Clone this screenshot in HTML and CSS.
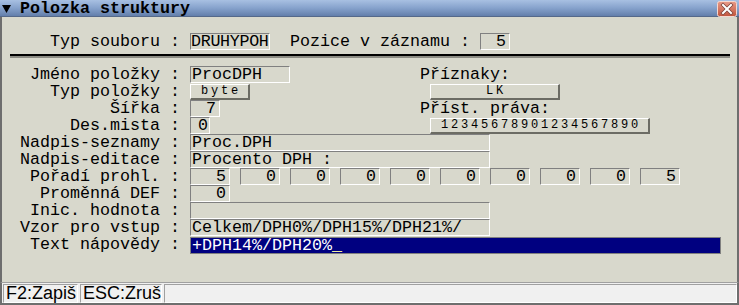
FILE: index.html
```html
<!DOCTYPE html>
<html>
<head>
<meta charset="utf-8">
<link rel="stylesheet" href="styles.css">
</head>
<body>
<div class="window">
  <div class="titlebar">
    <svg class="tri" width="9" height="8" viewBox="0 0 9 8"><polygon points="0,0 9,0 4.5,8" fill="#000"/></svg>
    <span class="title">Polozka struktury</span>
    <svg class="close" width="20" height="16" viewBox="0 0 20 16">
      <defs><linearGradient id="cg" x1="0" y1="0" x2="0" y2="1"><stop offset="0" stop-color="#e89a88"/><stop offset="1" stop-color="#c0543c"/></linearGradient></defs>
      <rect x="0.5" y="0.5" width="19" height="15" rx="2" fill="url(#cg)" stroke="#f4d8d0"/>
      <path d="M6 4 L14 12 M14 4 L6 12" stroke="#7a4038" stroke-width="3.4" stroke-linecap="square"/>
      <path d="M6 4 L14 12 M14 4 L6 12" stroke="#fff" stroke-width="2" stroke-linecap="square"/>
    </svg>
  </div>
  <div class="content">
    <div class="head">
      <span class="lbl">Typ souboru :</span>
      <span class="fld w80 tight">DRUHYPOH</span>
      <span class="txt gap20">Pozice v záznamu :</span>
      <span class="fld w30 r">5</span>
    </div>
    <div class="rule"></div>
    <div class="upper">
      <div class="col-left">
        <div class="row"><span class="lbl">Jméno položky :</span><span class="fld w100">ProcDPH</span></div>
        <div class="row"><span class="lbl">Typ položky :</span><span class="btn w60">byte</span></div>
        <div class="row"><span class="lbl">Šířka :</span><span class="fld w30 r">7</span></div>
        <div class="row"><span class="lbl">Des.mista :</span><span class="fld w20 pl">0</span></div>
      </div>
      <div class="col-right">
        <div class="row"><span class="txt">Příznaky:</span></div>
        <div class="row"><span class="btn w130 ind">LK</span></div>
        <div class="row"><span class="txt">Příst. práva:</span></div>
        <div class="row"><span class="btn w220 ind">12345678901234567890</span></div>
      </div>
    </div>
    <div class="row"><span class="lbl">Nadpis-seznamy :</span><span class="fld w300">Proc.DPH</span></div>
    <div class="row"><span class="lbl">Nadpis-editace :</span><span class="fld w300">Procento DPH :</span></div>
    <div class="row"><span class="lbl">Pořadí prohl. :</span>
      <div class="multi">
        <span class="fld w40 r">5</span><span class="fld w40 r">0</span><span class="fld w40 r">0</span><span class="fld w40 r">0</span><span class="fld w40 r">0</span><span class="fld w40 r">0</span><span class="fld w40 r">0</span><span class="fld w40 r">0</span><span class="fld w40 r">0</span><span class="fld w40 r">5</span>
      </div>
    </div>
    <div class="row"><span class="lbl">Proměnná DEF :</span><span class="fld w40 r">0</span></div>
    <div class="row"><span class="lbl">Inic. hodnota :</span><span class="fld w300"></span></div>
    <div class="row"><span class="lbl">Vzor pro vstup :</span><span class="fld w300">Celkem/DPH0%/DPH15%/DPH21%/</span></div>
    <div class="row"><span class="lbl">Text nápovědy :</span><span class="fld active">+DPH14%/DPH20%<span class="cursor">_</span></span></div>
  </div>
  <div class="status">
    <span class="cell c1">F2:Zapiš</span>
    <span class="cell c2">ESC:Zruš</span>
    <span class="cell c3"></span>
  </div>
</div>
</body>
</html>
```
FILE: styles.css
```css
html, body {
  margin: 0;
  padding: 0;
  background: #d8d8cc;
}
.window {
  width: 739px;
  height: 305px;
  box-sizing: border-box;
  display: flex;
  flex-direction: column;
  background: #d8d8cc;
  font-family: "Liberation Mono", monospace;
  font-size: 16.67px;
  color: #000;
  overflow: hidden;
}
.titlebar {
  height: 17px;
  flex: none;
  display: flex;
  align-items: center;
  background: linear-gradient(#a8c0e2, #86a2cc 50%, #637fab);
  border-bottom: 1px solid #55698a;
  box-sizing: border-box;
}
.tri {
  margin-left: 2px;
  margin-top: 1px;
}
.title {
  margin-left: 9px;
  font-weight: bold;
  line-height: 15px;
  flex: 1;
}
.close {
  margin-right: 2px;
  margin-top: 1px;
}
.content {
  flex: 1;
  border-left: 2px solid #6e6e6e;
  border-right: 2px solid #6e6e6e;
  display: flex;
  flex-direction: column;
}
.head {
  display: flex;
  height: 17px;
  line-height: 17px;
  margin-top: 16px;
}
.rule {
  margin: 4px 7px 0 8px;
  height: 2px;
  background: #000;
  border-bottom: 2px solid #8c8c84;
}
.upper {
  display: flex;
  margin-top: 8px;
}
.col-left {
  width: 418px;
}
.row {
  display: flex;
  height: 17px;
  white-space: pre;
}
.lbl {
  width: 178px;
  text-align: right;
  margin-right: 10px;
  line-height: 17px;
  flex: none;
}
.txt {
  line-height: 17px;
  white-space: pre;
}
.gap20 {
  margin-left: 20px;
  margin-right: 10px;
}
.fld {
  box-sizing: border-box;
  height: 17px;
  line-height: 15px;
  border: 1px solid;
  border-color: #808080 #fff #fff #808080;
  padding: 0 0 0 1px;
  white-space: pre;
  flex: none;
}
.tight { letter-spacing: -0.3px; padding-left: 0; }
.r { text-align: right; padding: 0 3px 0 0; }
.pl { padding-left: 7px; }
.w20 { width: 20px; }
.w30 { width: 30px; }
.w40 { width: 40px; }
.w80 { width: 80px; }
.w100 { width: 100px; }
.w300 { width: 300px; }
.multi {
  display: flex;
  gap: 10px;
}
.btn {
  box-sizing: border-box;
  height: 16px;
  margin-top: 1px;
  border-top: 1px solid #fff;
  border-left: 1px solid #fff;
  border-right: 2px solid #6c6c64;
  border-bottom: 2px solid #6c6c64;
  font-size: 12px;
  letter-spacing: 2.8px;
  text-align: center;
  line-height: 13px;
  padding-left: 3px;
}
.w60 { width: 60px; }
.w130 { width: 130px; }
.w220 { width: 220px; }
.ind { margin-left: 10px; }
.active {
  width: 531px;
  background: #000080;
  color: #fff;
  border-color: #808080;
  margin-top: 1px;
}
.cursor {
  color: #f2eea0;
}
.status {
  height: 23px;
  flex: none;
  box-sizing: border-box;
  background: #f0f0f0;
  border-top: 1px solid #a0a0a0;
  border-left: 2px solid #6e6e6e;
  border-right: 2px solid #6e6e6e;
  border-bottom: 2px solid #6e6e6e;
  display: flex;
  gap: 2px;
  padding: 1px 0 0 1px;
  font-family: "Liberation Sans", Arial, sans-serif;
  font-size: 18px;
}
.cell {
  box-sizing: border-box;
  height: 19px;
  line-height: 17px;
  border: 1px solid;
  border-color: #a0a0a0 #fff #fff #a0a0a0;
  padding-left: 2px;
  white-space: nowrap;
}
.c1 { width: 75px; }
.c2 { width: 82px; }
.c3 { flex: 1; }
```
